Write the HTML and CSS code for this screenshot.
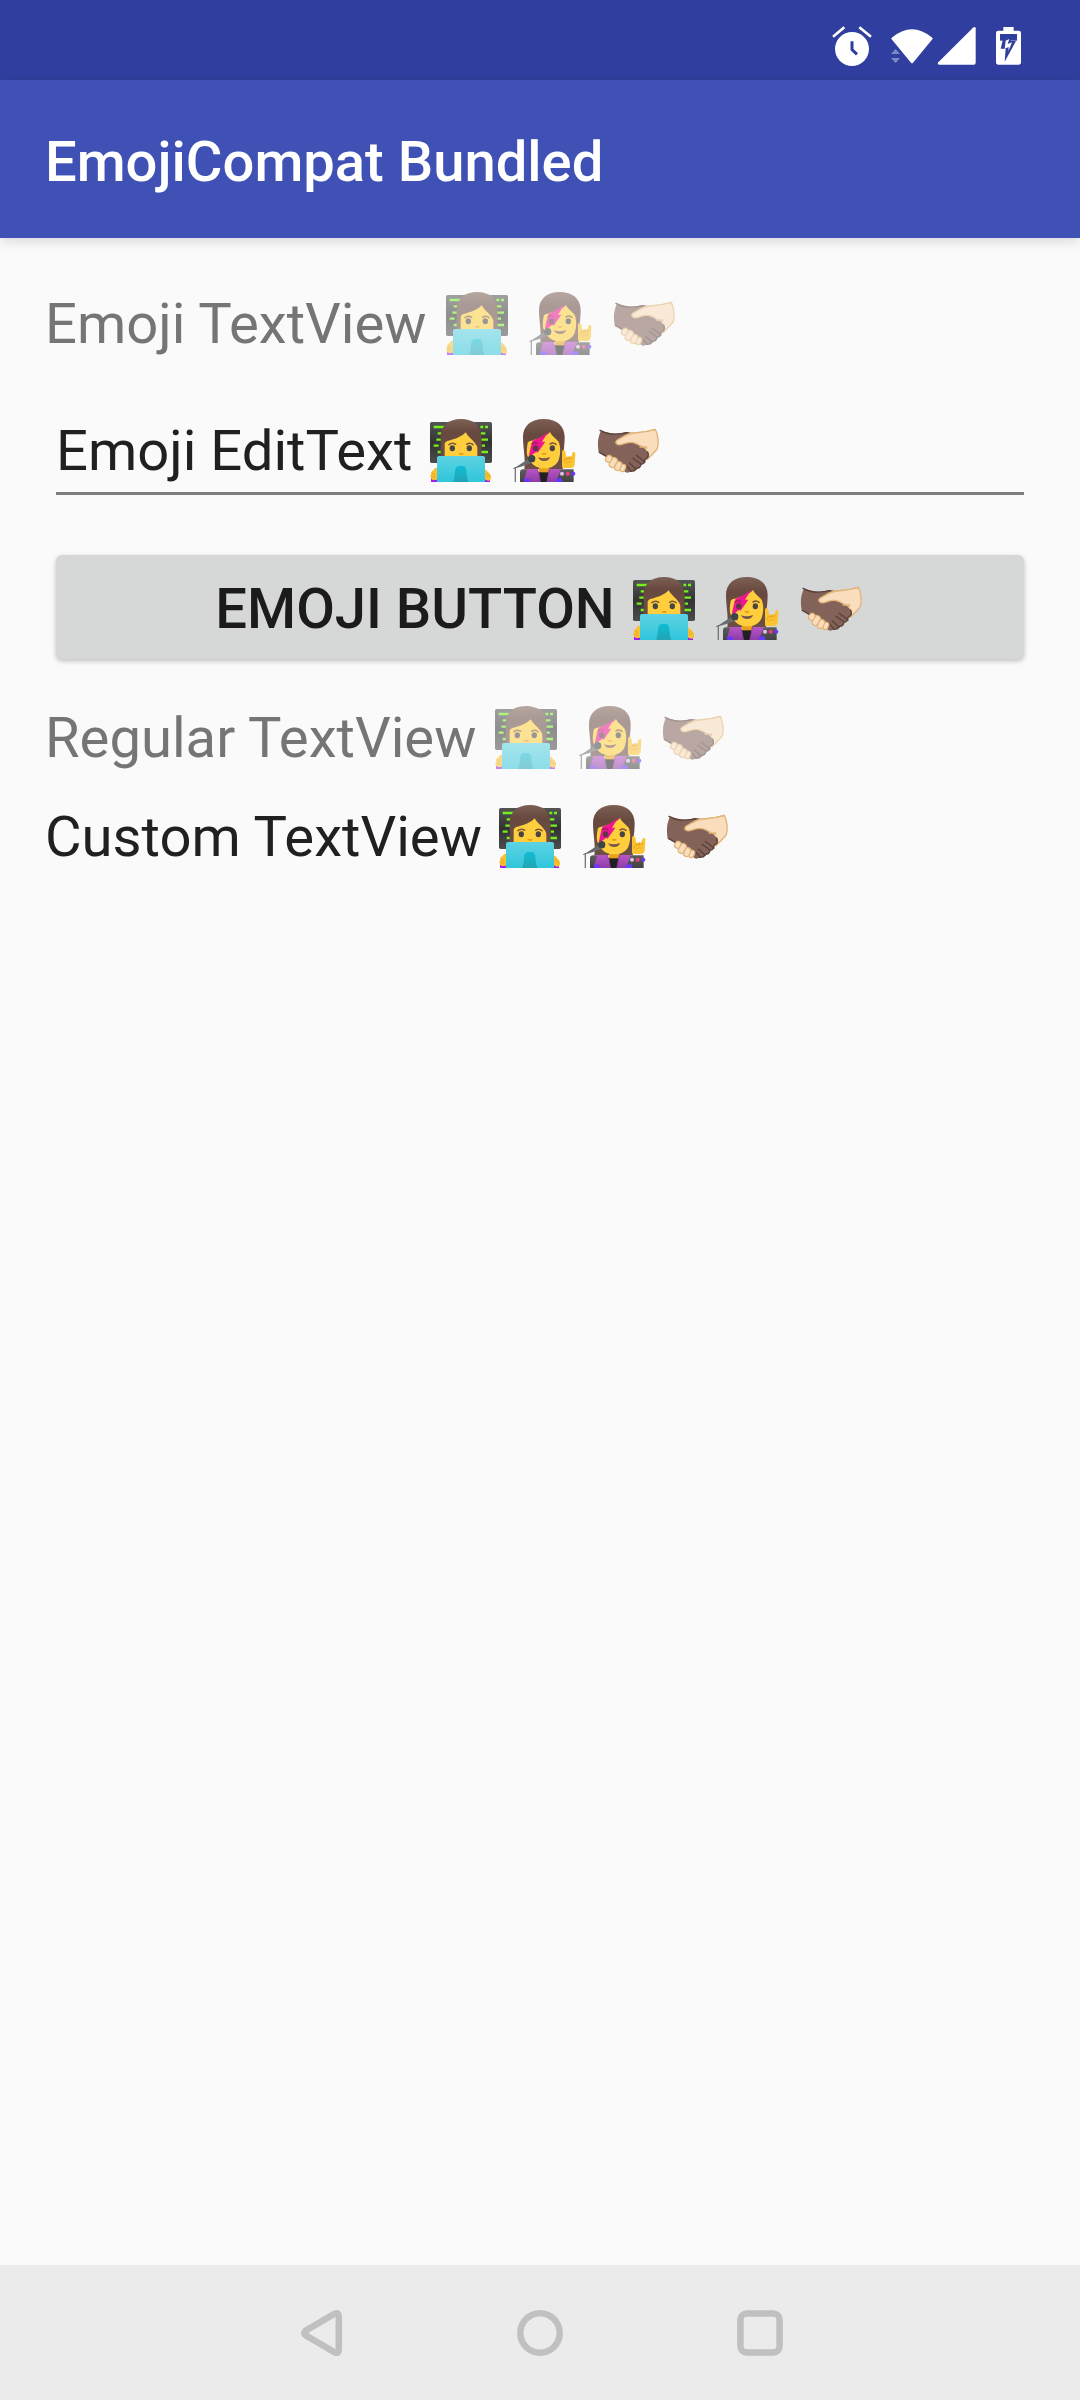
FILE: index.html
```html
<!DOCTYPE html>
<html lang="en">
<head>
<meta charset="utf-8">
<title>EmojiCompat Bundled</title>
<link rel="stylesheet" href="styles.css">
</head>
<body>
<svg class="defs" aria-hidden="true">
  <defs>
    <linearGradient id="board" x1="0" y1="0" x2="0" y2="1"><stop offset="0" stop-color="#545454"/><stop offset=".5" stop-color="#333"/><stop offset="1" stop-color="#4c4c4c"/></linearGradient>
    <linearGradient id="laptop" x1="0" y1="0" x2="0" y2="1"><stop offset="0" stop-color="#5dd2e2"/><stop offset="1" stop-color="#2fc6dc"/></linearGradient>
    <linearGradient id="mark" x1="0" y1="0" x2="0" y2="1"><stop offset="0" stop-color="#0fbcd4"/><stop offset="1" stop-color="#22a4b4"/></linearGradient>
    <linearGradient id="hair" x1="0" y1="0" x2="0" y2="1"><stop offset="0" stop-color="#7d6054"/><stop offset=".3" stop-color="#67493f"/><stop offset="1" stop-color="#6b4e45"/></linearGradient>
    <linearGradient id="jacket" x1="0" y1="0" x2="0" y2="1"><stop offset="0" stop-color="#ba55c6"/><stop offset="1" stop-color="#8b3da6"/></linearGradient>
    <linearGradient id="sleeve" x1="0" y1="0" x2="0" y2="1"><stop offset="0" stop-color="#5c5c5c"/><stop offset="1" stop-color="#424242"/></linearGradient>

    <symbol id="technologist" viewBox="24 36 198 198">
      <rect x="30" y="51" width="186" height="123" rx="5" fill="url(#board)"/>
      <path d="M41 66h34M53 85h14M49 104h14M41 122h15M53 141h12M181 66h9M195 66h9M180 85h16M184 104h20M185 122h10M184 141h20" stroke="#76f01c" stroke-width="7"/>
      <path d="M62 170V96C62 60 87 42 123 42s61 18 61 54v74z" fill="url(#hair)"/>
      <path d="M74 160v-42c0-5 2-7 8-10 25-6 43-13 55-26 7 13 18 20 27 31 5 6 8 10 8 17v30z" fill="#ffce3d"/>
      <path d="M87 119q9-8 20-1M140 118q10-7 19 1" fill="none" stroke="#7a5540" stroke-width="4.500" stroke-linecap="round"/>
      <ellipse cx="97" cy="130" rx="8" ry="9" fill="#484542"/><ellipse cx="148" cy="130" rx="8" ry="9" fill="#484542"/>
      <path d="M115 144h17q-2 6-8 6t-9-6" fill="#e99a14"/>
      <path d="M33 219h24v12H33zM190 219h20v12h-20z" fill="#a020e8"/>
      <path d="M51 189c-8-3-8 6-11 7-7 2-5 8-7 12-4 8 0 17 8 17l12-1zM193 195c7-3 9 4 11 7 6 2 7 8 9 13 1 8-3 12-9 12l-12-5z" fill="#f9c02f"/>
      <path d="M35 203l11 7M34 213l11 4M202 203l-5 8M210 211l-10 4" stroke="#dc9720" stroke-width="2"/>
      <path d="M51 231v-72q0-6 6-6h132q6 0 6 6v72z" fill="url(#laptop)"/>
      <path d="M99 231q5-12 6-31 1-17 13-17h9q12 0 12 17 1 19 6 31z" fill="url(#mark)"/>
    </symbol>

    <symbol id="singer" viewBox="21 36 198 198">
      <path d="M61 193C65 160 57 132 57 97c0-35 24-55 62-55 39 0 63 20 63 55 0 37-9 66-5 96z" fill="url(#hair)"/>
      <path d="M105 178h31v34h-31z" fill="#e9a01b"/>
      <path d="M71 114c4-8 12-5 18-9 22-6 38-12 49-24 5 12 17 18 26 29 7 18 5 39 1 51-5 18-21 29-45 29-24 0-39-12-45-31-8-5-8-20-4-45z" fill="#ffce3d"/>
      <path d="M134 79C115 95 99 103 86 107L80 127 75 151 79 154 97 140 101 143 124 110 114 110z" fill="#ed1690"/>
      <path d="M84 117q8-7 17-1" fill="none" stroke="#a51c68" stroke-width="4" stroke-linecap="round"/>
      <path d="M138 117q9-7 18 1" fill="none" stroke="#79513d" stroke-width="4.500" stroke-linecap="round"/>
      <ellipse cx="95" cy="130" rx="8" ry="9" fill="#603549"/><ellipse cx="145" cy="130" rx="8" ry="9" fill="#484542"/>
      <path d="M112 144h16q-2 6-8 6t-8-6" fill="#e99a14"/>
      <path d="M102 157q18 6 36-1-3 12-18 12-13 0-18-11z" fill="#795548"/>
      <path d="M48 231v-29q0-9 9-9h23v38zM153 193h56v38h-56z" fill="url(#sleeve)"/>
      <path d="M104 202h29v29h-29z" fill="#202020"/>
      <path d="M70 192h30l10 39H75l-14-10zM136 192h35l-15 39h-28z" fill="url(#jacket)"/>
      <path d="M59 220l19 3v8H61zM155 223l16-5 5 13h-22z" fill="#6935ff"/>
      <path d="M100 193l5 14 4 24M136 193l-7 38" fill="none" stroke="#893a9e" stroke-width="3"/>
      <circle cx="174" cy="206" r="6" fill="#e1bee7"/><circle cx="191" cy="206" r="6" fill="#ec407a"/><circle cx="208" cy="206" r="6" fill="#6935ff"/>
      <path d="M174 186v-46q0-5 5-5 4 0 5 6l3 15q8-4 15-1l3-10q2-5 6-4 4 1 3 6l-2 32q-3 10-12 10h-20q-6 0-6-3z" fill="#fbc32f"/>
      <path d="M182 172q-5-8 3-10l18-3M188 157v9M196 155v10M204 154v9M185 175q9-7 18-4" stroke="#e49b20" stroke-width="2" fill="none"/>
      <path d="M34 231v-43" stroke="#777" stroke-width="4"/>
      <path d="M27 190q7-5 10-5l36-23 10 11q-21 9-43 15l-12 4z" fill="#686c6d"/>
      <circle cx="83" cy="161" r="11" fill="#42484b"/>
      <path d="M75 153l16 16M74 160l11 11M83 150l10 10" stroke="#263238" stroke-width="1.5"/>
    </symbol>

    <symbol id="handshake" viewBox="30 36 198 198">
      <path d="M127 86l30-3c23-1 40-5 54-10 9 20 10 43 6 58-7 11-20 20-30 33l-51-31z" fill="#f9ddbd" stroke="#e1b477" stroke-width="4" stroke-linejoin="round"/>
      <path d="M49 76c20 9 43 13 65 8 9-2 15-1 22 1l9 21c15 5 25 13 38 29q13 13 6 22-4 5-9 6 1 13-11 15-2 13-15 12-4 10-16 8-13 11-23-2L62 154q-11-7-21-12c-4-26-3-45 8-66z" fill="#826259"/>
      <path d="M45 76c20 11 43 14 67 9 10-3 17-2 25 0M188 141q7 15-8 22M180 165q-1 12-12 13M168 179q-3 12-15 11M154 192q-6 8-18 7M144 160l25 18M154 151l26 20M133 174l19 17M125 183l12 14M43 142l22 13" fill="none" stroke="#5b4038" stroke-width="4" stroke-linecap="round"/>
      <path d="M150 84c-15-1-25 3-35 10l-19 11c-9 8 0 17 15 13 14-4 23-8 34-5 17 4 27 13 40 18l28-43-8-10z" fill="#f9ddbd"/>
      <path d="M211 73q-27 8-61 11-17-1-35 11l-18 10c-11 8 0 17 14 13 14-4 23-8 34-5 16 4 24 14 40 17M165 126h20" fill="none" stroke="#e1b477" stroke-width="4" stroke-linecap="round"/>
      <g fill="#f9ddbd" stroke="#e1b477" stroke-width="3.5">
        <rect x="106" y="177" width="15" height="23" rx="7.5" transform="rotate(25 113 188)"/>
        <rect x="91" y="169" width="17" height="28" rx="8.5" transform="rotate(26 99 183)"/>
        <rect x="76" y="157" width="18" height="31" rx="9" transform="rotate(29 85 172)"/>
        <rect x="63" y="150" width="17" height="22" rx="8.5" transform="rotate(32 71 161)"/>
      </g>
    </symbol>
  </defs>
</svg>

<div class="screen">
  <header class="status-bar">
    <svg class="alarm" viewBox="36 48 120 120" fill="#fff">
      <circle cx="96" cy="117" r="51"/>
      <path d="M39 80l34-28M118 52l35 28" stroke="#fff" stroke-width="8"/>
      <path d="M96 94v25l15 14" fill="none" stroke="#303f9f" stroke-width="9"/>
    </svg>
    <svg class="wifi" viewBox="210 48 132 120" fill="#fff">
      <path d="M215 83q61-51 122 0 2 3 0 5l-58 70q-3 3-6 0l-58-70q-2-3 0-5z"/>
      <path d="M213 132h27l-13-15zM213 144h27l-13 15z" opacity=".38"/>
    </svg>
    <svg class="signal" viewBox="351 48 120 120" fill="#fff">
      <path d="M355 157L459 53q7-5 8 2v103q0 6-6 6H357q-6-1-2-7z"/>
    </svg>
    <svg class="battery" viewBox="525 48 81 120">
      <path d="M550 51h31v11h15q7 0 7 7v87q0 8-7 8h-61q-7 0-7-8V69q0-7 7-7h15z" fill="#fff"/>
      <path d="M540 72h51v20h-51z" fill="#303f9f"/>
      <path d="M551 79h26l-5 14h16l-34 62 3-39h-15z" fill="#303f9f"/>
      <path d="M557 92l11-5-5 15 13-5-11 27 1-13-12 5z" fill="#fff"/>
    </svg>
  </header>
  <div class="app-bar"><h1 class="title">EmojiCompat Bundled</h1></div>

  <main class="content">
    <div class="line muted">
      <span>Emoji TextView</span>
      <span class="emojis"><svg><use href="#technologist"/></svg><svg><use href="#singer"/></svg><svg><use href="#handshake"/></svg></span>
    </div>
    <div class="line field">
      <span>Emoji EditText</span>
      <span class="emojis"><svg><use href="#technologist"/></svg><svg><use href="#singer"/></svg><svg><use href="#handshake"/></svg></span>
    </div>
    <button class="line button" type="button">
      <span>EMOJI BUTTON</span>
      <span class="emojis"><svg><use href="#technologist"/></svg><svg><use href="#singer"/></svg><svg><use href="#handshake"/></svg></span>
    </button>
    <div class="line muted regular">
      <span>Regular TextView</span>
      <span class="emojis"><svg><use href="#technologist"/></svg><svg><use href="#singer"/></svg><svg><use href="#handshake"/></svg></span>
    </div>
    <div class="line custom">
      <span>Custom TextView</span>
      <span class="emojis"><svg><use href="#technologist"/></svg><svg><use href="#singer"/></svg><svg><use href="#handshake"/></svg></span>
    </div>
  </main>

  <nav class="nav-bar">
    <svg viewBox="0 0 50 50"><path d="M40 5.500q3.800-1.400 3.800 3v33q0 4.400-3.800 3L10.600 27.200q-2.900-2.200 0-4.400z"/></svg>
    <svg viewBox="0 0 50 50"><circle cx="25" cy="25" r="19.700"/></svg>
    <svg viewBox="0 0 50 50"><rect x="5.400" y="5.400" width="39.200" height="39.200" rx="6.500"/></svg>
  </nav>
</div>
</body>
</html>
```
FILE: styles.css
```css
* { box-sizing: border-box; }

body {
  margin: 0;
  background: #fafafa;
  font-family: Roboto, "Liberation Sans", sans-serif;
  font-size: 56.2px;
  line-height: 66px;
  color: #202020;
}

.defs { display: block; width: 0; height: 0; }

.screen {
  display: flex;
  flex-direction: column;
  width: 1080px;
  height: 2400px;
}

.status-bar {
  display: flex;
  justify-content: flex-end;
  height: 80px;
  padding: 26px 58px 0 0;
  background: #303f9f;
}
.status-bar svg { height: 40px; }
.alarm { width: 40px; margin-right: 18px; }
.wifi { width: 44px; margin-right: 3px; }
.signal { width: 40px; margin-right: 18px; }
.battery { width: 27px; }

.app-bar {
  display: flex;
  align-items: center;
  height: 158px;
  padding: 5px 45px 0;
  background: #3f51b5;
  box-shadow: 0 3px 12px rgba(0, 0, 0, .14);
}
.title {
  margin: 0;
  color: #fff;
  font-size: 56.15px;
  font-weight: 500;
}

.content {
  display: flex;
  flex: 1;
  flex-direction: column;
  padding: 53px 45px 0;
}

.line {
  display: flex;
  gap: 15.5px;
  height: 66px;
  white-space: nowrap;
}
.emojis {
  display: flex;
  gap: 17.5px;
  margin-top: -1px;
}
.emojis svg { width: 66px; height: 66px; }
.muted { gap: 17px; color: #757575; }
.muted .emojis { opacity: .54; }

.field {
  height: 138px;
  margin: 0 11px;
  padding-top: 61px;
  border-bottom: 3px solid #7e7e7e;
}

.button {
  justify-content: center;
  gap: 16px;
  height: 104px;
  margin: 60px 11px 0;
  padding: 21px 1px 0 0;
  border: 0;
  border-radius: 6px;
  background: #d6d7d7;
  box-shadow: 0 2px 5px rgba(0, 0, 0, .24);
  color: #1b1b1b;
  font: 500 56.15px/66px Roboto, "Liberation Sans", sans-serif;
}

.regular { margin-top: 46px; }
.custom { margin-top: 33px; }

.nav-bar {
  display: flex;
  justify-content: center;
  gap: 170px;
  height: 135px;
  padding-top: 43px;
  background: #ebebeb;
}
.nav-bar svg {
  width: 50px;
  height: 50px;
  fill: none;
  stroke: #c0c0c0;
  stroke-width: 6.5px;
}
```
